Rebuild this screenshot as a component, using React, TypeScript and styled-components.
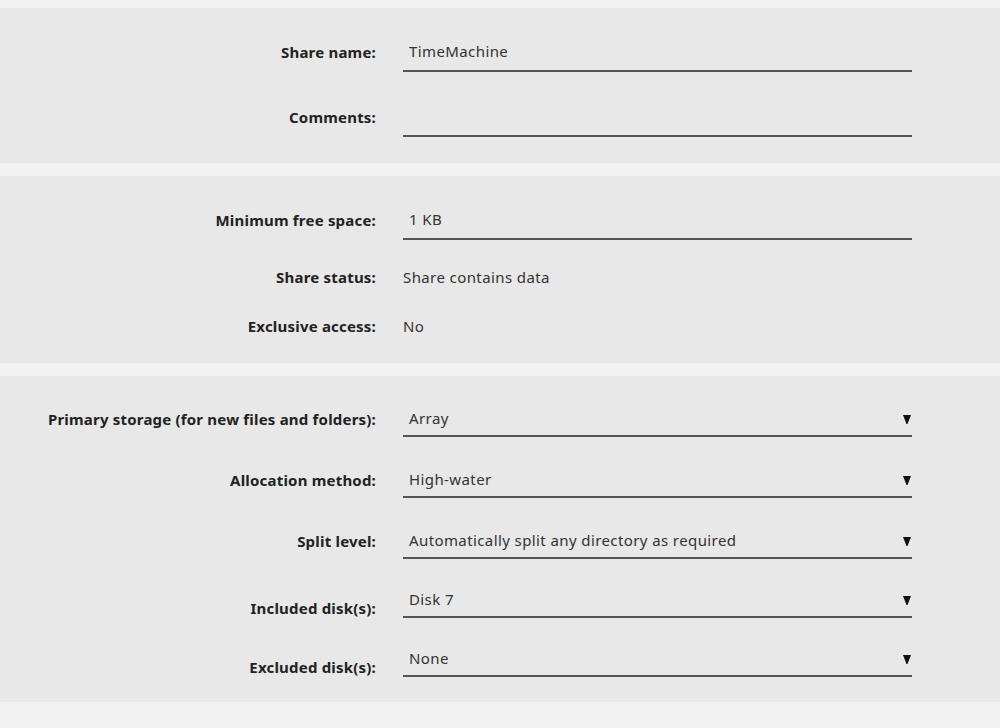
import React from "react";
import styled, { createGlobalStyle } from "styled-components";

const GlobalStyle = createGlobalStyle`
  html, body {
    margin: 0;
    padding: 0;
    background: #f2f2f2;
  }
  body {
    font-family: "Noto Sans", "Open Sans", sans-serif;
    font-size: 15px;
    color: #333;
  }
`;

type Field = {
  kind: "input" | "text" | "select";
  label: string;
  value: string;
  multi?: boolean;
  space?: number;
};

type PanelData = { top: number; bottom: number; fields: Field[] };

const panels: PanelData[] = [
  {
    top: 24,
    bottom: 26,
    fields: [
      { kind: "input", label: "Share name:", value: "TimeMachine" },
      { kind: "input", label: "Comments:", value: "", space: 25 },
    ],
  },
  {
    top: 24,
    bottom: 27,
    fields: [
      { kind: "input", label: "Minimum free space:", value: "1 KB" },
      { kind: "text", label: "Share status:", value: "Share contains data", space: 27 },
      { kind: "text", label: "Exclusive access:", value: "No", space: 29 },
    ],
  },
  {
    top: 25,
    bottom: 25,
    fields: [
      { kind: "select", label: "Primary storage (for new files and folders):", value: "Array" },
      { kind: "select", label: "Allocation method:", value: "High-water", space: 25 },
      {
        kind: "select",
        label: "Split level:",
        value: "Automatically split any directory as required",
        space: 25,
      },
      { kind: "select", label: "Included disk(s):", value: "Disk 7", multi: true, space: 23 },
      { kind: "select", label: "Excluded disk(s):", value: "None", multi: true, space: 23 },
    ],
  },
];

const App = () => {
  return (
    <>
      <GlobalStyle />
      <Page>
        {panels.map((panel, i) => (
          <Panel key={i} $top={panel.top} $bottom={panel.bottom}>
            {panel.fields.map((f) => (
              <Row key={f.label} $space={f.space ?? 0}>
                <Label $multi={!!f.multi}>{f.label}</Label>
                {f.kind === "input" && <TextInput defaultValue={f.value} />}
                {f.kind === "text" && <Value>{f.value}</Value>}
                {f.kind === "select" && (
                  <Select>
                    <span>{f.value}</span>
                    <Arrow viewBox="0 0 8 9">
                      <polygon points="0,0 8,0 4.5,9 3.5,9" fill="#111" />
                    </Arrow>
                  </Select>
                )}
              </Row>
            ))}
          </Panel>
        ))}
      </Page>
    </>
  );
};

const Page = styled.div`
  display: flex;
  flex-direction: column;
  gap: 13px;
  padding: 8px 0 27px;
`;

const Panel = styled.section<{ $top: number; $bottom: number }>`
  background: #e8e8e8;
  display: flex;
  flex-direction: column;
  padding: ${(p) => p.$top}px 0 ${(p) => p.$bottom}px;
`;

const Row = styled.div<{ $space: number }>`
  display: grid;
  grid-template-columns: 376px 509px;
  column-gap: 27px;
  align-items: center;
  margin-top: ${(p) => p.$space}px;
`;

const Label = styled.label<{ $multi: boolean }>`
  text-align: right;
  font-weight: 700;
  letter-spacing: 0.2px;
  color: #222;
  line-height: 20px;
  margin-top: ${(p) => (p.$multi ? 16 : 0)}px;
  white-space: nowrap;
`;

const TextInput = styled.input`
  box-sizing: border-box;
  height: 40px;
  width: 100%;
  padding: 0 6px;
  border: none;
  border-bottom: 2px solid #555;
  background: transparent;
  font: inherit;
  letter-spacing: 0.4px;
  color: #333;
  outline: none;
`;

const Value = styled.div`
  line-height: 20px;
  letter-spacing: 0.4px;
  color: #333;
`;

const Select = styled.div`
  box-sizing: border-box;
  height: 36px;
  display: flex;
  align-items: center;
  justify-content: space-between;
  padding: 0 1px 0 6px;
  border-bottom: 2px solid #555;
  letter-spacing: 0.4px;
  color: #333;
`;

const Arrow = styled.svg`
  width: 8px;
  height: 9px;
  margin-top: 2px;
`;

export default App;
